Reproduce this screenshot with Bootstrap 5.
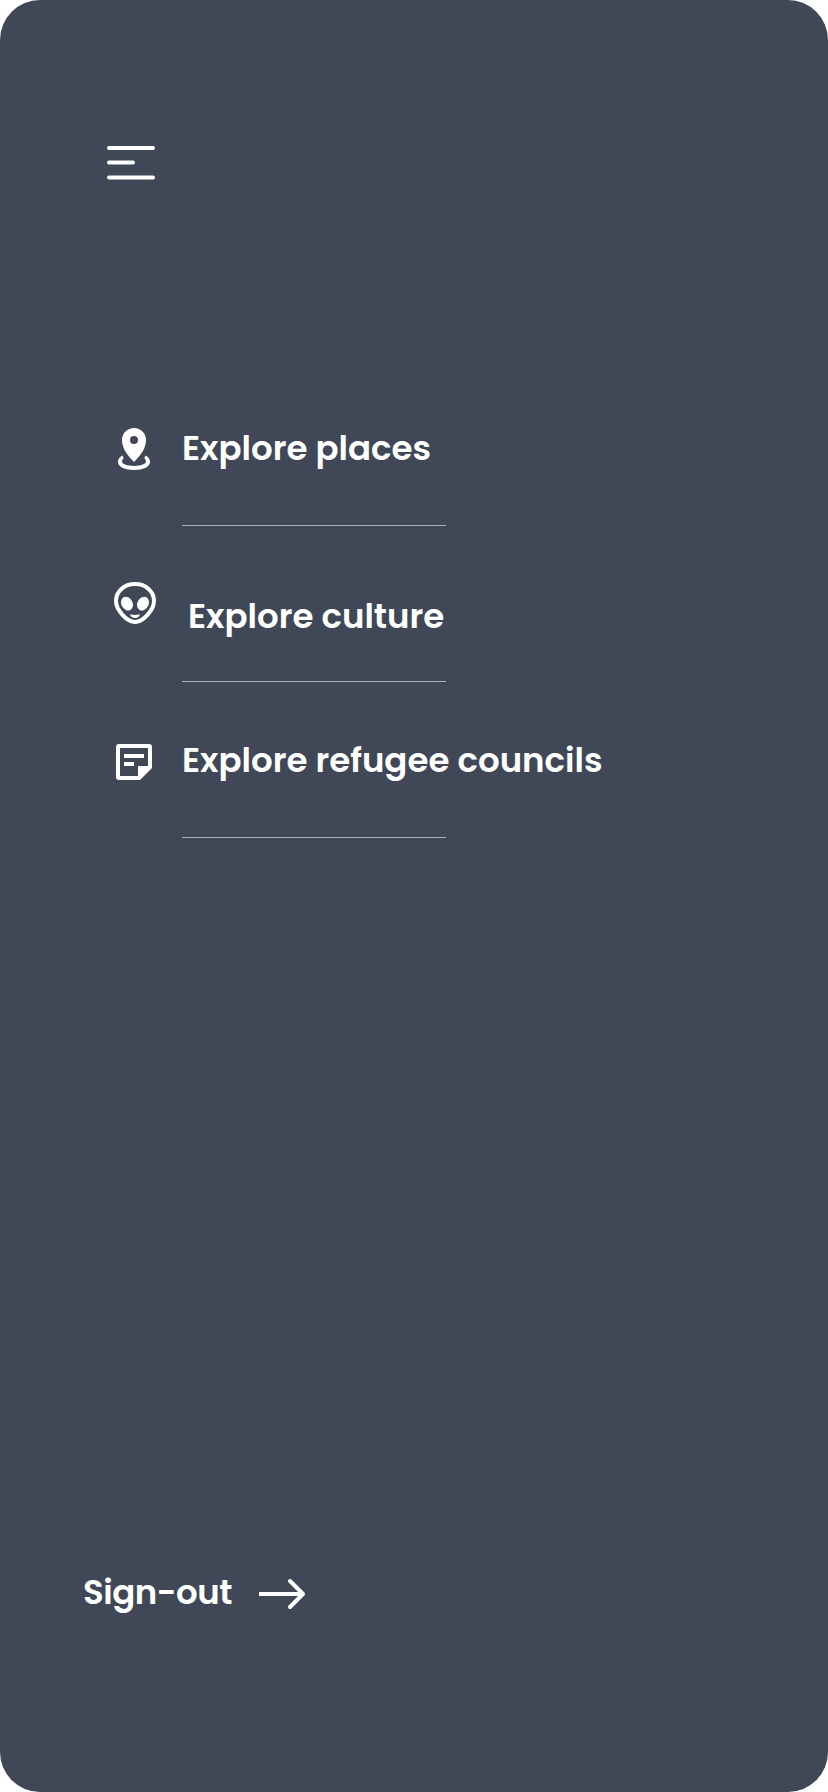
<!DOCTYPE html>
<html lang="en">

<head>
    <meta charset="UTF-8">
    <meta name="viewport" content="width=device-width, initial-scale=1">
    <title>Menu</title>
    <link href="https://cdn.jsdelivr.net/npm/bootstrap@5.3.0/dist/css/bootstrap.min.css" rel="stylesheet">

    <style>
        body {
            background-color: #fff;
            font-family: Poppins, Inter, "Open Sans", sans-serif;
        }

        .menu-screen {
            background-color: #404756;
            border-radius: 40px;
            padding: 143px 84px 171px 82px;
        }

        .menu-toggle {
            margin-left: 23px;
            line-height: 0;
        }

        .menu-list {
            margin: 187px 0 0 28px;
        }

        .menu-row {
            height: 156px;
            gap: 24px;
        }

        .menu-row svg {
            margin-top: 55px;
        }

        .menu-row.culture svg {
            margin: 53px -1px 0 1px;
        }

        .menu-label {
            width: 264px;
            padding-top: 53px;
            border-bottom: 1px solid #aab3bb;
        }

        .menu-row.culture .menu-label {
            padding: 65px 0 0 6px;
        }

        .menu-link {
            color: #fff;
            font-size: 34px;
            font-weight: 600;
            line-height: 50px;
        }

        .sign-out {
            gap: 25px;
            margin-left: 1px;
            letter-spacing: -0.5px;
        }

        .sign-out span {
            padding-bottom: 4px;
        }
    </style>
</head>

<body>
    <div class="menu-screen d-flex flex-column min-vh-100">
        <header>
            <button class="menu-toggle btn p-0 border-0" type="button" aria-label="Menu">
                <svg width="52" height="40" viewBox="0 0 52 40" fill="none" stroke="#fff" stroke-width="4" stroke-linecap="round">
                    <path d="M4 5H48M4 19.6H28M4 34.4H48" />
                </svg>
            </button>
        </header>

        <nav class="menu-list">
            <div class="menu-row d-flex">
                <svg class="flex-shrink-0" width="48" height="48" viewBox="0 0 48 48" fill="#fff">
                    <path fill-rule="evenodd" d="M24 3A12 12 0 0 0 12 15C12 23 17 30 24 37C31 30 36 23 36 15A12 12 0 0 0 24 3ZM24 11a4 4 0 1 1 0 8a4 4 0 0 1 0-8Z" />
                    <path d="M12.5 30.5C9.5 32 8 34.4 8 37C8 42 15.2 45 24 45S40 42 40 37C40 34.4 38.5 32 35.5 30.5L34.3 33.3C35.5 34.3 36 35.5 36 36.6C36 39 31 41 24 41S12 39 12 36.6C12 35.5 12.5 34.3 13.7 33.3Z" />
                </svg>
                <div class="menu-label">
                    <a class="menu-link text-decoration-none text-nowrap d-block" href="#">Explore places</a>
                </div>
            </div>
            <div class="menu-row culture d-flex">
                <svg class="flex-shrink-0" width="48" height="48" viewBox="0 0 48 48" fill="#fff">
                    <path fill="none" stroke="#fff" stroke-width="4" d="M24 5C13 5 5 12.5 5 22C5 31 16 43 24 43S43 31 43 22C43 12.5 35 5 24 5Z" />
                    <ellipse cx="16" cy="24.7" rx="5.6" ry="7.2" transform="rotate(-28 16 24.7)" />
                    <ellipse cx="32" cy="24.7" rx="5.6" ry="7.2" transform="rotate(28 32 24.7)" />
                    <path d="M19 35C21.5 36.2 26.5 36.2 29 35C28.5 37.5 26.5 39 24 39S19.5 37.5 19 35Z" />
                </svg>
                <div class="menu-label">
                    <a class="menu-link text-decoration-none text-nowrap d-block" href="#">Explore culture</a>
                </div>
            </div>
            <div class="menu-row d-flex">
                <svg class="flex-shrink-0" width="48" height="48" viewBox="0 0 48 48" fill="#fff">
                    <path fill-rule="evenodd" d="M9 7H39a3 3 0 0 1 3 3V31L30 43H9a3 3 0 0 1-3-3V10a3 3 0 0 1 3-3ZM10 11V39H28V29H38V11ZM14 17H34V21H14ZM14 25H24V29H14Z" />
                </svg>
                <div class="menu-label">
                    <a class="menu-link text-decoration-none text-nowrap d-block" href="#">Explore refugee councils</a>
                </div>
            </div>
        </nav>

        <a class="menu-link sign-out d-flex align-items-center mt-auto text-decoration-none" href="#">
            <span class="text-nowrap">Sign-out</span>
            <svg width="50" height="34" viewBox="0 0 50 34" fill="none" stroke="#fff" stroke-width="4" stroke-linecap="round" stroke-linejoin="round">
                <path stroke-linecap="butt" d="M2 17H45" />
                <path d="M33 4L46 17L33 30" />
            </svg>
        </a>
    </div>

    <script src="https://cdn.jsdelivr.net/npm/bootstrap@5.3.0/dist/js/bootstrap.bundle.min.js"></script>
</body>

</html>
